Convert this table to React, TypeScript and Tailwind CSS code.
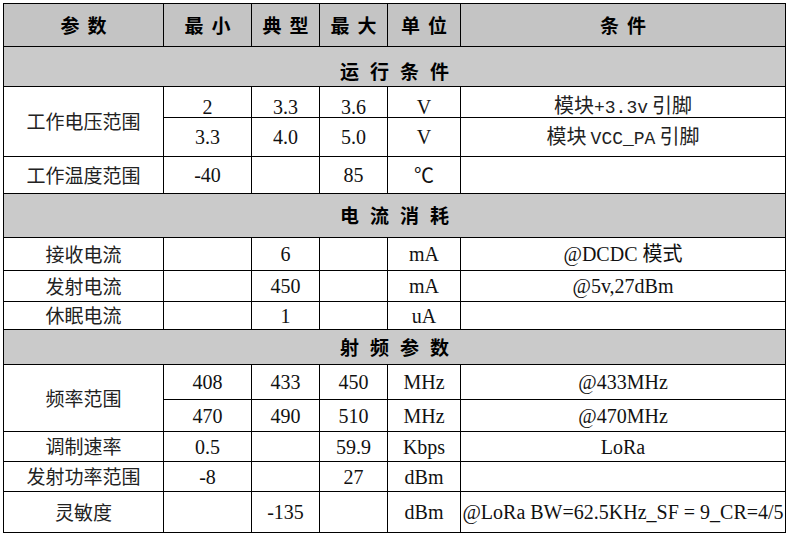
import React, { FC, ReactNode } from "react";

const serif = "font-['Liberation_Serif','Noto_Sans_CJK_SC',serif]";
const cjk = "font-['Noto_Sans_CJK_SC',sans-serif]";

type CellProps = { children?: ReactNode; className?: string };

// 普通单元格
const Cell: FC<CellProps> = ({ children, className = "" }) => (
    <div className={`flex items-center justify-center bg-white whitespace-nowrap text-[20px] text-[#111] ${serif} ${className}`}>
        {children}
    </div>
);

// 表头单元格
const Head: FC<CellProps> = ({ children, className = "" }) => (
    <div className={`flex items-center justify-center bg-[#c4c4c4] text-[19px] font-bold tracking-[8px] pl-[8px] text-black ${cjk} ${className}`}>
        {children}
    </div>
);

// 分段标题
const Section: FC<CellProps> = ({ children, className = "" }) => (
    <div className={`col-span-6 flex items-center justify-center bg-[#cacaca] text-[19px] font-bold tracking-[11px] pl-[11px] text-black ${cjk} ${className}`}>
        {children}
    </div>
);

const Name: FC<CellProps> = ({ children, className = "" }) => (
    <div className={`flex items-center justify-center bg-white whitespace-nowrap text-[19px] text-[#222] ${cjk} ${className}`}>
        {children}
    </div>
);

const Mono: FC<{ children: ReactNode }> = ({ children }) => (
    <span className="font-['Liberation_Mono',monospace] text-[18px]">{children}</span>
);

const Sp: FC = () => <span className={`font-['Liberation_Serif',serif] text-[16px]`}> </span>;

const App: FC = () => {
    return (
        <div className="min-h-screen bg-white p-[3px]">
            <div className="grid w-fit gap-px bg-black p-px grid-cols-[159px_87px_67px_67px_72px_324px] grid-rows-[42px_39px_30px_38px_36px_43px_32px_30px_27px_34px_34px_31px_29px_29px_40px]">
                <Head>参数</Head>
                <Head>最小</Head>
                <Head>典型</Head>
                <Head>最大</Head>
                <Head>单位</Head>
                <Head>条件</Head>

                <Section className="pt-[10px]">运行条件</Section>

                <Name className="row-span-2">工作电压范围</Name>
                <Cell className="pt-[10px]">2</Cell>
                <Cell className="pt-[10px]">3.3</Cell>
                <Cell className="pt-[10px]">3.6</Cell>
                <Cell className="pt-[10px]">V</Cell>
                <Cell className={`pt-[8px] text-[19px] text-[#222] ${cjk}`}>
                    <span className="whitespace-pre">模块<Mono>+3.3v</Mono><Sp />引脚</span>
                </Cell>
                <Cell>3.3</Cell>
                <Cell>4.0</Cell>
                <Cell>5.0</Cell>
                <Cell>V</Cell>
                <Cell className={`text-[19px] text-[#222] ${cjk}`}>
                    <span className="whitespace-pre">模块<Sp /><Mono>VCC_PA</Mono><Sp />引脚</span>
                </Cell>

                <Name>工作温度范围</Name>
                <Cell>-40</Cell>
                <Cell />
                <Cell>85</Cell>
                <Cell className={`text-[18px] ${cjk}`}>℃</Cell>
                <Cell />

                <Section>电流消耗</Section>

                <Name>接收电流</Name>
                <Cell />
                <Cell>6</Cell>
                <Cell />
                <Cell>mA</Cell>
                <Cell>@DCDC 模式</Cell>

                <Name>发射电流</Name>
                <Cell />
                <Cell>450</Cell>
                <Cell />
                <Cell>mA</Cell>
                <Cell>@5v,27dBm</Cell>

                <Name>休眠电流</Name>
                <Cell />
                <Cell>1</Cell>
                <Cell />
                <Cell>uA</Cell>
                <Cell />

                <Section>射频参数</Section>

                <Name className="row-span-2">频率范围</Name>
                <Cell>408</Cell>
                <Cell>433</Cell>
                <Cell>450</Cell>
                <Cell>MHz</Cell>
                <Cell>@433MHz</Cell>
                <Cell>470</Cell>
                <Cell>490</Cell>
                <Cell>510</Cell>
                <Cell>MHz</Cell>
                <Cell>@470MHz</Cell>

                <Name>调制速率</Name>
                <Cell>0.5</Cell>
                <Cell />
                <Cell>59.9</Cell>
                <Cell>Kbps</Cell>
                <Cell>LoRa</Cell>

                <Name>发射功率范围</Name>
                <Cell>-8</Cell>
                <Cell />
                <Cell>27</Cell>
                <Cell>dBm</Cell>
                <Cell />

                <Name>灵敏度</Name>
                <Cell />
                <Cell>-135</Cell>
                <Cell />
                <Cell>dBm</Cell>
                <Cell className="text-[18.5px]">@LoRa BW=62.5KHz_SF = 9_CR=4/5</Cell>
            </div>
        </div>
    );
};

export default App;
